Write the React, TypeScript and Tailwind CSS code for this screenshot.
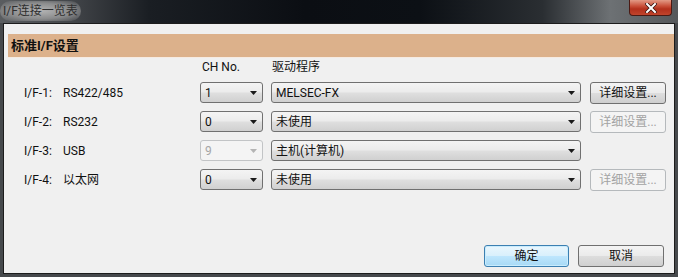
import React from "react";

interface IfRow {
  name: string;
  kind: string;
  ch: string;
  chDisabled?: boolean;
  driver: string;
  detail: "on" | "off" | "none";
}

const rows: IfRow[] = [
  { name: "I/F-1:", kind: "RS422/485", ch: "1", driver: "MELSEC-FX", detail: "on" },
  { name: "I/F-2:", kind: "RS232", ch: "0", driver: "未使用", detail: "off" },
  { name: "I/F-3:", kind: "USB", ch: "9", chDisabled: true, driver: "主机(计算机)", detail: "none" },
  { name: "I/F-4:", kind: "以太网", ch: "0", driver: "未使用", detail: "off" },
];

function Arrow({ disabled }: { disabled?: boolean }) {
  return (
    <svg width="7" height="4" viewBox="0 0 7 4" className="shrink-0">
      <path d="M0 0H7L3.5 4Z" fill={disabled ? "#b4b4b4" : "#1a1a1a"} />
    </svg>
  );
}

function Combo({ value, width, disabled }: { value: string; width: string; disabled?: boolean }) {
  return (
    <div
      className={`${width} h-[21px] rounded-[3px] border flex items-center justify-between pl-[4px] pr-[5px] ${
        disabled
          ? "border-[#c2c4c6] bg-[#f4f4f4] text-[#a6a6a6]"
          : "border-[#707070] bg-[linear-gradient(#f4f4f4_0%,#ececec_45%,#dedede_55%,#d0d0d0_100%)] text-[#111]"
      }`}
    >
      <span className="leading-none">{value}</span>
      <Arrow disabled={disabled} />
    </div>
  );
}

function Button({ label, variant, width }: { label: string; variant: "normal" | "disabled" | "default"; width: string }) {
  const styles = {
    normal: "border-[#707070] bg-[linear-gradient(#f4f4f4_0%,#ebebeb_48%,#dddddd_52%,#cfcfcf_100%)] text-[#111]",
    disabled: "border-[#b5b9bc] bg-[#f4f4f4] text-[#a3a3a3]",
    default: "border-[#3c7fb1] bg-[linear-gradient(#eaf6fd_0%,#d9f0fc_48%,#bee6fd_52%,#a7d9f5_100%)] text-[#111] shadow-[inset_0_0_0_1px_#c9ecfd]",
  }[variant];
  return (
    <div className={`${width} h-[22px] rounded-[3px] border flex items-center justify-center ${styles}`}>
      {label}
    </div>
  );
}

export default function App() {
  return (
    <div className="w-[678px] h-[277px] flex flex-col bg-[#46494c] text-[12px] font-['Roboto','Noto_Sans_CJK_SC',sans-serif] overflow-hidden">
      {/* Title bar */}
      <div className="h-[23px] shrink-0 flex items-start justify-between bg-[linear-gradient(90deg,#5a5d60_0%,#44474b_10%,#1a1e23_22%,#0b0e13_45%,#0c1015_62%,#2a2e32_80%,#6d7174_90%,#55585b_100%)]">
        {/* title with aero glow */}
        <span className="mt-[1px] px-[3px] py-[2px] leading-[16px] text-[#2e2e2e] rounded-[10px] bg-[radial-gradient(ellipse_at_center,rgba(190,190,190,0.9)_0%,rgba(160,160,160,0.75)_55%,rgba(120,120,120,0)_100%)]">
          I/F连接一览表
        </span>
        <div className="mr-[6px] w-[43px] h-[16px] rounded-b-[4px] border border-t-0 border-[#4a1a14] bg-[linear-gradient(#e29a86_0%,#c9503a_40%,#b3301c_60%,#c0442c_100%)] flex items-center justify-center">
          <svg width="12" height="10" viewBox="0 0 12 10">
            <path d="M2 1L10 9M10 1L2 9" stroke="#3a1410" strokeWidth="3.6" strokeLinecap="square" />
            <path d="M2 1L10 9M10 1L2 9" stroke="#ffffff" strokeWidth="2" strokeLinecap="square" />
          </svg>
        </div>
      </div>

      {/* Client area */}
      <div className="flex-1 mx-[3px] mb-[3px] border border-[#1c1c1c] bg-[#f0f0f0] flex flex-col text-[#111]">
        <div className="ml-[4px] mt-[10px] h-[24px] bg-[#dcb18b] border-b border-[#f6ebe2] flex items-center pl-[3px]">
          <span className="font-bold text-[13px] text-[#111]">标准I/F设置</span>
        </div>

        <div className="mt-[1px] h-[16px] flex items-center pl-[198px]">
          <span className="w-[70px]">CH No.</span>
          <span>驱动程序</span>
        </div>

        <div className="mt-[7px] flex flex-col gap-[8px] pl-[20px]">
          {rows.map((r) => (
            <div key={r.name} className="h-[21px] flex items-center">
              <span className="w-[39px]">{r.name}</span>
              <span className="w-[137px]">{r.kind}</span>
              <Combo value={r.ch} width="w-[63px]" disabled={r.chDisabled} />
              <div className="w-[8px]" />
              <Combo value={r.driver} width="w-[310px]" />
              <div className="w-[9px]" />
              {r.detail !== "none" && (
                <Button label="详细设置..." variant={r.detail === "on" ? "normal" : "disabled"} width="w-[76px]" />
              )}
            </div>
          ))}
        </div>

        <div className="flex-1" />
        <div className="flex justify-end gap-[9px] mr-[10px] mb-[6px]">
          <Button label="确定" variant="default" width="w-[85px]" />
          <Button label="取消" variant="normal" width="w-[86px]" />
        </div>
      </div>
    </div>
  );
}
